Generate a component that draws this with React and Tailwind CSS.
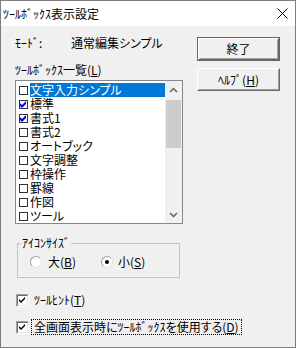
import React from "react";

const items = [
  { label: "文字入力シンプル", checked: false, selected: true },
  { label: "標準", checked: true },
  { label: "書式1", checked: true },
  { label: "書式2", checked: false },
  { label: "オートブック", checked: false },
  { label: "文字調整", checked: false },
  { label: "枠操作", checked: false },
  { label: "罫線", checked: false },
  { label: "作図", checked: false },
  { label: "ツール", checked: false },
];

const font = "[font-family:'Noto_Sans_CJK_JP','Noto_Sans',sans-serif]";
const palt = "[font-feature-settings:'palt']";

const ListCheck = ({ checked }) => (
  <div className="w-[9px] h-[9px] border border-[#333] bg-white shrink-0 relative">
    {checked && (
      <svg className="absolute left-0 top-0" width="7" height="7" viewBox="0 0 7 7">
        <path d="M0 2 L2 4 L6 0 L6 3 L2 7 L0 5 Z" fill="#0000ff" />
      </svg>
    )}
  </div>
);

const Check3D = ({ checked }) => (
  <div className="w-[13px] h-[13px] border border-t-[#a0a0a0] border-l-[#a0a0a0] border-r-white border-b-white shrink-0">
    <div className="w-full h-full border border-t-[#696969] border-l-[#696969] border-r-[#e3e3e3] border-b-[#e3e3e3] bg-white">
      {checked && (
        <svg width="9" height="9" viewBox="0 0 9 9">
          <path d="M1 3 L3 5 L7 1 L7 3 L3 7 L1 5 Z" fill="#000" />
        </svg>
      )}
    </div>
  </div>
);

const Radio = ({ checked }) => (
  <div className="w-[12px] h-[12px] rounded-full border border-t-[#a0a0a0] border-l-[#a0a0a0] border-r-[#e3e3e3] border-b-[#e3e3e3] bg-white flex items-center justify-center shrink-0">
    {checked && <div className="w-[4px] h-[4px] rounded-full bg-black" />}
  </div>
);

const Button = ({ children, isDefault, h }) => (
  <div className={`${h} ${isDefault ? "border border-[#646464]" : ""}`}>
    <div className="w-full h-full border border-t-white border-l-white border-r-[#696969] border-b-[#696969]">
      <div className="w-full h-full border border-t-[#f0f0f0] border-l-[#f0f0f0] border-r-[#a0a0a0] border-b-[#a0a0a0] bg-[#f0f0f0] flex items-center justify-center text-[12px] leading-[14px]">
        {children}
      </div>
    </div>
  </div>
);

export default function App() {
  return (
    <div className={`w-[296px] h-[348px] border border-[#7d7d7d] bg-[#f0f0f0] flex flex-col text-black ${font}`}>
      <div className="h-[25px] bg-white flex items-center justify-between pl-[2px] pr-[7px] shrink-0">
        <span className="text-[12px] leading-[14px]">ﾂｰﾙﾎﾞｯｸｽ表示設定</span>
        <svg width="11" height="11" viewBox="0 0 11 11">
          <path d="M0.5 0.5 L10.5 10.5 M10.5 0.5 L0.5 10.5" stroke="#000" strokeWidth="1" />
        </svg>
      </div>

      <div className="flex pl-[14px] text-[12px] leading-[14px]">
        <div className="w-[168px] flex flex-col">
          <div className="mt-[10px] h-[14px] flex">
            <span className="w-[56px]">ﾓｰﾄﾞ:</span>
            <span className={palt}>通常編集シンプル</span>
          </div>

          <div className="mt-[13px] h-[14px]">
            ﾂｰﾙﾎﾞｯｸｽ一覧(<span className="underline">L</span>)
          </div>

          <div className={`mt-[3px] h-[144px] border border-[#828790] bg-white flex ${palt}`}>
            <div className="flex-1 pt-[2px] flex flex-col">
              {items.map((it) => (
                <div key={it.label} className="h-[14px] flex items-center pl-[3px]">
                  <ListCheck checked={it.checked} />
                  <div
                    className={`ml-[2px] flex-1 h-[14px] pr-[2px] ${
                      it.selected ? "bg-[#0078d7] text-white" : ""
                    }`}
                  >
                    {it.label}
                  </div>
                </div>
              ))}
            </div>
            <div className="w-[17px] bg-[#f0f0f0] flex flex-col">
              <div className="h-[17px] flex items-center justify-center">
                <svg width="9" height="6" viewBox="0 0 9 6">
                  <path d="M1 5 L4.5 1.5 L8 5" stroke="#606060" strokeWidth="1.5" fill="none" />
                </svg>
              </div>
              <div className="mt-[2px] mx-[1px] h-[48px] bg-[#cdcdcd]" />
              <div className="flex-1" />
              <div className="h-[17px] flex items-center justify-center">
                <svg width="9" height="6" viewBox="0 0 9 6">
                  <path d="M1 1 L4.5 4.5 L8 1" stroke="#606060" strokeWidth="1.5" fill="none" />
                </svg>
              </div>
            </div>
          </div>

          <div className="mt-[19px] ml-[2px] w-[163px] h-[35px] border border-[#c4c4c4] relative">
            <span className="absolute left-[3px] -top-[8px] bg-[#f0f0f0] px-[1px]">ｱｲｺﾝｻｲｽﾞ</span>
            <div className="mt-[11px] h-[14px] flex items-center pl-[12px]">
              <Radio />
              <span className="ml-[6px]">
                大(<span className="underline">B</span>)
              </span>
              <div className="ml-[25px]">
                <Radio checked />
              </div>
              <span className="ml-[5px]">
                小(<span className="underline">S</span>)
              </span>
            </div>
          </div>

          <div className="mt-[15px] h-[14px] flex items-center pl-[1px]">
            <Check3D checked />
            <span className="ml-[5px]">
              ﾂｰﾙﾋﾝﾄ(<span className="underline">T</span>)
            </span>
          </div>

          <div className="mt-[13px] h-[14px] flex items-center pl-[1px]">
            <Check3D checked />
            <span className={`ml-[2px] border border-dotted border-black px-[2px] whitespace-nowrap ${palt}`}>
              全画面表示時にﾂｰﾙﾎﾞｯｸｽを使用する(<span className="underline">D</span>)
            </span>
          </div>
        </div>

        <div className="ml-[14px] w-[83px] flex flex-col pt-[11px] gap-[7px]">
          <Button isDefault h="h-[24px]">終了</Button>
          <Button h="h-[23px]">
            <span>
              ﾍﾙﾌﾟ(<span className="underline">H</span>)
            </span>
          </Button>
        </div>
      </div>
    </div>
  );
}
